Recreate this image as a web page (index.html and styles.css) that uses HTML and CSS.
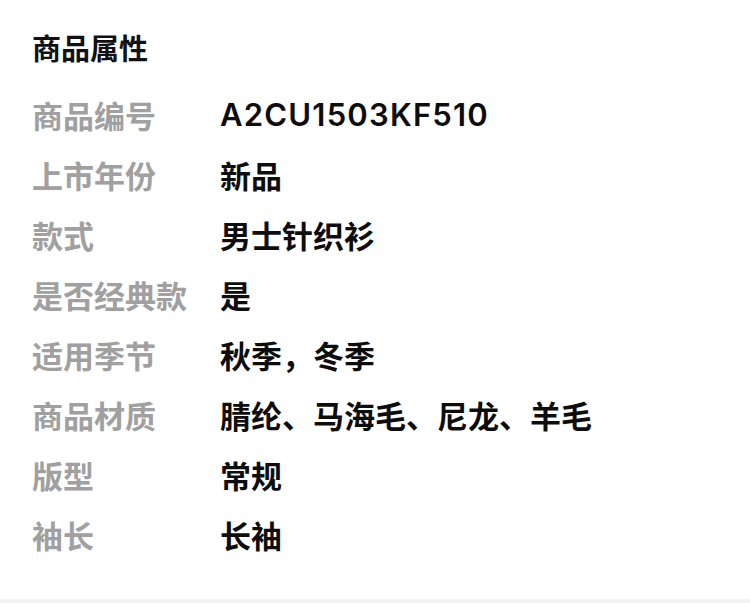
FILE: index.html
```html
<!DOCTYPE html>
<html lang="zh-CN">
<head>
    <meta charset="UTF-8">
    <meta name="viewport" content="width=device-width, initial-scale=1.0">
    <title>商品属性</title>
    <link rel="stylesheet" href="styles.css">
</head>
<body>
    <section class="attrs">
        <h2 class="attrsTitle">商品属性</h2>
        <dl class="attrList">
            <dt>商品编号</dt><dd class="attrCode">A2CU1503KF510</dd>
            <dt>上市年份</dt><dd>新品</dd>
            <dt>款式</dt><dd>男士针织衫</dd>
            <dt>是否经典款</dt><dd>是</dd>
            <dt>适用季节</dt><dd>秋季，冬季</dd>
            <dt>商品材质</dt><dd>腈纶、马海毛、尼龙、羊毛</dd>
            <dt>版型</dt><dd>常规</dd>
            <dt>袖长</dt><dd>长袖</dd>
        </dl>
    </section>
    <div class="divider"></div>
</body>
</html>
```

FILE: styles.css
```css
body {
    margin: 0;
    background-color: #fff;
    font-family: "Noto Sans CJK SC", "Noto Sans", sans-serif;
}

.attrs {
    padding: 27px 0 35px 32px;
}

.attrsTitle {
    margin: 0;
    font-size: 29px;
    line-height: 40px;
    font-weight: 700;
    color: #111;
}

.attrList {
    display: grid;
    grid-template-columns: 188px auto;
    grid-auto-rows: 60px;
    align-items: center;
    margin: 17px 0 0;
}

.attrList dt {
    font-size: 31px;
    font-weight: 600;
    color: #a0a0a0;
}

.attrList dd {
    margin: 0;
    font-size: 31px;
    font-weight: 700;
    color: #0d0d0d;
}

.attrList .attrCode {
    font-family: Inter, "Noto Sans CJK SC", sans-serif;
    font-weight: 600;
    letter-spacing: 1.2px;
}

.divider {
    height: 20px;
    background-color: #f2f2f2;
}
```
